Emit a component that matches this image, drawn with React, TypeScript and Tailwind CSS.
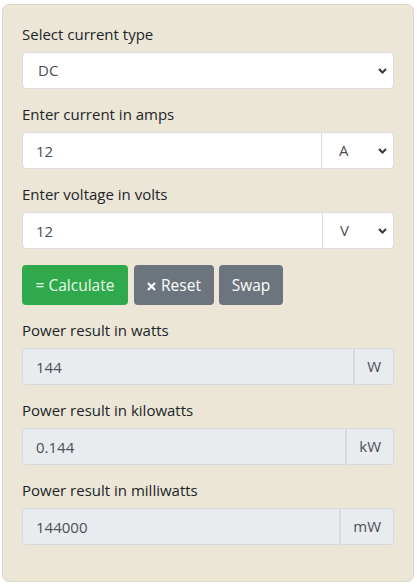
import React from "react";

const Chevron = () => (
  <svg width="9" height="7" viewBox="0 0 9 7" className="pointer-events-none absolute right-[7px] top-1/2 -translate-y-1/2">
    <path d="M1 1.5 L4.5 5 L8 1.5" fill="none" stroke="#343a40" strokeWidth="2" />
  </svg>
);

const Label = ({ children }: { children: React.ReactNode }) => (
  <div className="h-[21px] leading-[21px] mb-[7px] text-[15px] text-[#212529]">{children}</div>
);

export default function App() {
  const font = { fontFamily: '"Open Sans", "Noto Sans", sans-serif' };
  return (
    <div className="w-[417px] h-[586px] bg-white pt-[4px] pl-[2px]" style={font}>
      <div className="w-[412px] h-[578px] bg-[#ECE6D6] border border-[#ddd8c9] rounded-[7px] pt-[19px] px-[19px]">
        <Label>Select current type</Label>
        <div className="relative h-[37px] mb-[15px]">
          <select
            defaultValue="DC"
            className="appearance-none w-full h-full bg-white border border-[#dcdcdc] rounded-[4px] pl-[15px] text-[15px] text-[#495057] outline-none"
            style={font}
          >
            <option>DC</option>
            <option>AC - Single phase</option>
          </select>
          <Chevron />
        </div>

        <Label>Enter current in amps</Label>
        <div className="flex h-[37px] mb-[15px]">
          <input
            defaultValue="12"
            className="flex-1 min-w-0 h-full bg-white border border-[#dcdcdc] rounded-l-[4px] pl-[13px] text-[15px] text-[#495057] outline-none"
            style={font}
          />
          <div className="relative w-[72px] h-full">
            <select
              defaultValue="A"
              className="appearance-none w-full h-full bg-white border border-l-0 border-[#dcdcdc] rounded-r-[4px] pl-[17px] text-[15px] text-[#495057] outline-none"
              style={font}
            >
              <option>A</option>
              <option>mA</option>
            </select>
            <Chevron />
          </div>
        </div>

        <Label>Enter voltage in volts</Label>
        <div className="flex h-[37px] mb-[16px]">
          <input
            defaultValue="12"
            className="flex-1 min-w-0 h-full bg-white border border-[#dcdcdc] rounded-l-[4px] pl-[13px] text-[15px] text-[#495057] outline-none"
            style={font}
          />
          <div className="relative w-[71px] h-full">
            <select
              defaultValue="V"
              className="appearance-none w-full h-full bg-white border border-l-0 border-[#dcdcdc] rounded-r-[4px] pl-[17px] text-[15px] text-[#495057] outline-none"
              style={font}
            >
              <option>V</option>
              <option>kV</option>
            </select>
            <Chevron />
          </div>
        </div>

        <div className="flex h-[40px] mb-[15px]">
          <button className="w-[106px] h-full pt-[2px] bg-[#2fa94b] text-[#eafbe9] rounded-[4px] text-[15.5px]" style={font}>
            = Calculate
          </button>
          <button className="ml-[6px] w-[80px] h-full pt-[2px] bg-[#6c757d] text-white rounded-[4px] text-[15.5px] flex items-center justify-center gap-[5px]" style={font}>
            <svg width="9" height="9" viewBox="0 0 9 9">
              <path d="M1 1 L8 8 M8 1 L1 8" stroke="white" strokeWidth="2.2" />
            </svg>
            Reset
          </button>
          <button className="ml-[5px] w-[64px] h-full pt-[2px] bg-[#6c757d] text-white rounded-[4px] text-[15.5px]" style={font}>
            Swap
          </button>
        </div>

        {[
          { l: "Power result in watts", v: "144", u: "W" },
          { l: "Power result in kilowatts", v: "0.144", u: "kW" },
          { l: "Power result in milliwatts", v: "144000", u: "mW" },
        ].map((r) => (
          <div key={r.u}>
            <Label>{r.l}</Label>
            <div className="flex h-[37px] mb-[15px]">
              <input
                readOnly
                value={r.v}
                className="flex-1 min-w-0 h-full bg-[#e9ecef] border border-[#d6d9dc] rounded-l-[4px] pl-[13px] text-[15px] text-[#495057] outline-none"
                style={font}
              />
              <div className="h-full px-[12px] flex items-center bg-[#e9ecef] border border-l-[#dcdfe2] border-[#d6d9dc] rounded-r-[4px] text-[15px] text-[#495057]">
                {r.u}
              </div>
            </div>
          </div>
        ))}
      </div>
    </div>
  );
}
